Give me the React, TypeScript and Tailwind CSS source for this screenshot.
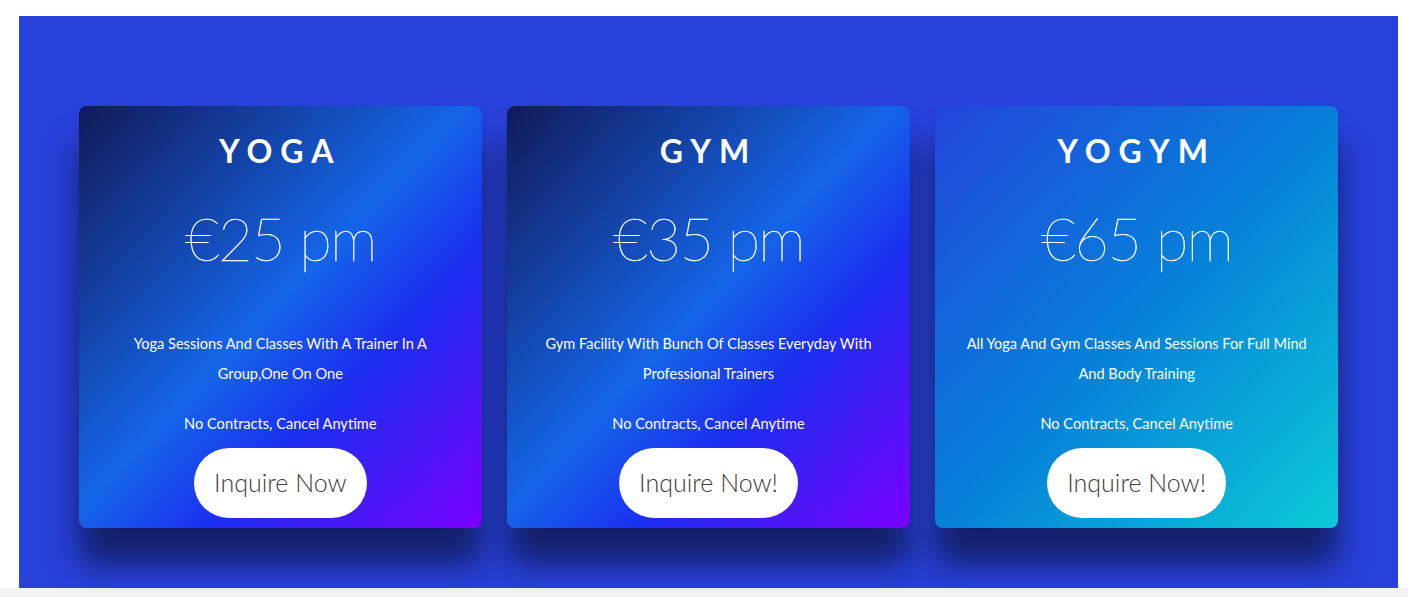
import React from "react";

type Plan = {
  name: string;
  price: string;
  desc: string;
  cta: string;
  bg: string;
};

const plans: Plan[] = [
  {
    name: "YOGA",
    price: "€25 pm",
    desc: "Yoga Sessions And Classes With A Trainer In A Group,One On One",
    cta: "Inquire Now",
    bg: "bg-[linear-gradient(to_bottom_right,#121a58_0%,#1565e8_48%,#1b2ff0_66%,#7a00ff_100%)]",
  },
  {
    name: "GYM",
    price: "€35 pm",
    desc: "Gym Facility With Bunch Of Classes Everyday With Professional Trainers",
    cta: "Inquire Now!",
    bg: "bg-[linear-gradient(to_bottom_right,#121a58_0%,#1565e8_48%,#1b2ff0_66%,#7a00ff_100%)]",
  },
  {
    name: "YOGYM",
    price: "€65 pm",
    desc: "All Yoga And Gym Classes And Sessions For Full Mind And Body Training",
    cta: "Inquire Now!",
    bg: "bg-[linear-gradient(to_bottom_right,#2346db_0%,#0680d9_50%,#0bcad6_100%)]",
  },
];

function PlanCard({ p }: { p: Plan }) {
  return (
    <div
      className={[
        "w-[403px] rounded-[8px] text-white text-center",
        "pt-[29px] pb-[10px] px-[28px] flex flex-col items-center",
        "shadow-[0_36px_30px_rgba(0,0,0,0.5)]",
        p.bg,
      ].join(" ")}
    >
      <h3 className="text-[32px] leading-none font-bold tracking-[8px]">{p.name}</h3>
      {/* hairline weight is a touch too faint, thicken it slightly */}
      <div className="mt-[41px] text-[60px] leading-none font-thin tracking-[-1.8px] [-webkit-text-stroke:0.4px_white]">
        {p.price}
      </div>
      <p className="mt-[61px] text-[14.6px] leading-[30px]">{p.desc}</p>
      <p className="mt-[20px] text-[14.6px] leading-[30px]">No Contracts, Cancel Anytime</p>
      <button
        type="button"
        className="mt-[9px] h-[70px] px-[20px] rounded-full bg-white text-[#3d3d3d] text-[25px] font-light flex items-center"
      >
        {p.cta}
      </button>
    </div>
  );
}

export default function App() {
  return (
    <div className="bg-white font-['Lato','Liberation_Sans',sans-serif]">
      <div className="pt-[16px] pl-[19px] pr-[10px]">
        <section className="bg-[#2841da] pt-[90px] pb-[60px] px-[60px] flex gap-[25.5px]">
          {plans.map((p) => (
            <PlanCard key={p.name} p={p} />
          ))}
        </section>
      </div>
      <div className="h-[9px] bg-[#f3f3f3]" />
    </div>
  );
}
